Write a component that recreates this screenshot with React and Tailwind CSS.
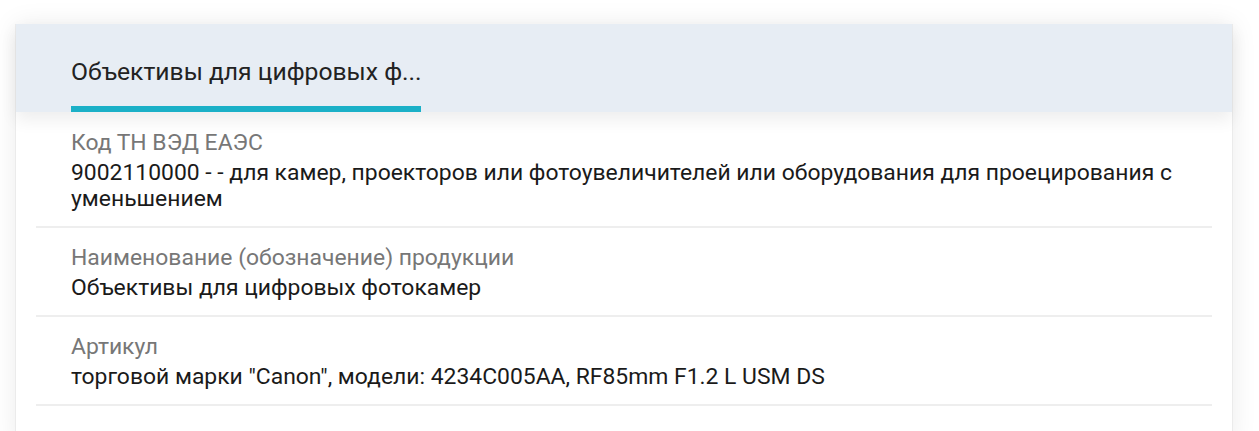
export default function App() {
  const rows = [
    {
      label: "Код ТН ВЭД ЕАЭС",
      value:
        "9002110000 - - для камер, проекторов или фотоувеличителей или оборудования для проецирования с уменьшением",
    },
    {
      label: "Наименование (обозначение) продукции",
      value: "Объективы для цифровых фотокамер",
    },
    {
      label: "Артикул",
      value: 'торговой марки "Canon", модели: 4234C005AA, RF85mm F1.2 L USM DS',
    },
  ];
  return (
    <div
      className="w-[1259px] h-[431px] bg-white overflow-hidden pt-[24px] pl-[15px]"
      style={{ fontFamily: "Roboto, 'Noto Sans', sans-serif" }}
    >
      <div className="w-[1218px] h-[420px] bg-white border-x border-[#ebebeb] shadow-[0_0_24px_rgba(0,0,0,0.08)]">
        <div className="relative z-10 h-[88px] bg-[#e7edf4] pl-[55px] shadow-[0_8px_16px_rgba(0,0,0,0.07)] flex flex-col justify-end">
          <div className="w-[350px]">
            <div className="text-[24.7px] leading-[30px] text-[#222] whitespace-nowrap mb-[19px]">
              Объективы для цифровых ф...
            </div>
            <div className="h-[6px] bg-[#1bb0c7]" />
          </div>
        </div>
        <div className="px-[20px] pt-[1px]">
          {rows.map((r) => (
            <div
              key={r.label}
              className="border-b-2 border-[#eeeeee] pl-[35px] pr-[20px] pt-[17px] pb-[14px]"
            >
              <div className="text-[22.9px] leading-[26px] text-[#777] mb-[4px]">{r.label}</div>
              <div className="text-[22.9px] leading-[26px] text-[#1a1a1a]">{r.value}</div>
            </div>
          ))}
        </div>
      </div>
    </div>
  );
}
